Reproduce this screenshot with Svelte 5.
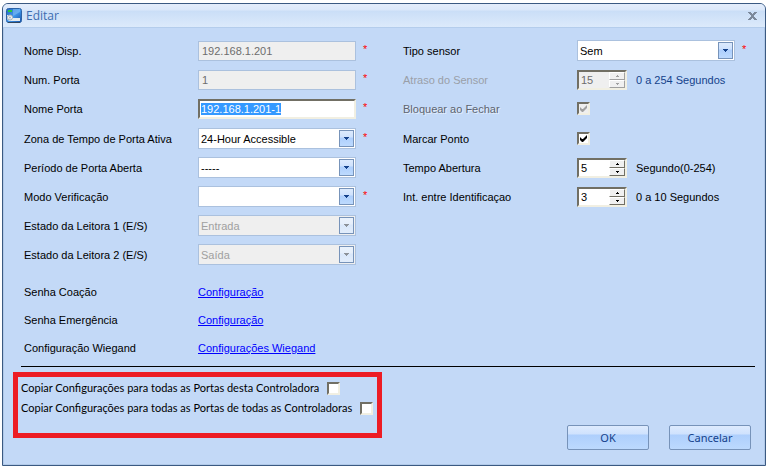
<script>
  import { onMount } from 'svelte';

  let nameInput;

  const leftRows = [
    { id: 'device', label: 'Nome Disp.', type: 'text', value: '192.168.1.201', disabled: true, required: true },
    { id: 'number', label: 'Num. Porta', type: 'text', value: '1', disabled: true, required: true },
    { id: 'name', label: 'Nome Porta', type: 'name', value: '192.168.1.201-1', required: true },
    { id: 'zone', label: 'Zona de Tempo de Porta Ativa', type: 'select', value: '24-Hour Accessible', required: true, start: true },
    { id: 'period', label: 'Período de Porta Aberta', type: 'select', value: '-----' },
    { id: 'mode', label: 'Modo Verificação', type: 'select', value: '', required: true },
    { id: 'reader1', label: 'Estado da Leitora 1 (E/S)', type: 'select', value: 'Entrada', disabled: true },
    { id: 'reader2', label: 'Estado da Leitora 2 (E/S)', type: 'select', value: 'Saída', disabled: true }
  ];

  const rightRows = [
    { id: 'sensor', label: 'Tipo sensor', type: 'select', value: 'Sem', required: true },
    { id: 'delay', label: 'Atraso do Sensor', type: 'spin', value: 15, max: 254, unit: '0 a 254 Segundos', disabled: true },
    { id: 'lock', label: 'Bloquear ao Fechar', type: 'check', checked: true, disabled: true },
    { id: 'mark', label: 'Marcar Ponto', type: 'check', checked: true, start: true },
    { id: 'open', label: 'Tempo Abertura', type: 'spin', value: 5, max: 254, unit: 'Segundo(0-254)' },
    { id: 'interval', label: 'Int. entre Identificaçao', type: 'spin', value: 3, max: 10, unit: '0 a 10 Segundos' }
  ];

  const links = [
    { label: 'Senha Coação', text: 'Configuração' },
    { label: 'Senha Emergência', text: 'Configuração' },
    { label: 'Configuração Wiegand', text: 'Configurações Wiegand' }
  ];

  function step(event, direction) {
    const input = event.currentTarget.closest('.spin').querySelector('input');
    if (direction > 0) input.stepUp();
    else input.stepDown();
  }

  onMount(() => {
    nameInput.focus();
    nameInput.select();
  });
</script>

{#snippet checkbox(id, checked, disabled)}
  <span class="check">
    <input type="checkbox" {id} {checked} {disabled} />
    <svg viewBox="0 0 7 7" aria-hidden="true"><path d="M0 2v3l2 2h1l4-4V0L3 4H2z" /></svg>
  </span>
{/snippet}

{#snippet field(row)}
  <div class="row" class:start={row.start}>
    <label class="caption {row.id}" for={row.id}>{row.label}</label>
    {#if row.type === 'text'}
      <input class="text" type="text" id={row.id} value={row.value} disabled={row.disabled} />
    {:else if row.type === 'name'}
      <input class="text sunken" type="text" id={row.id} value={row.value} bind:this={nameInput} spellcheck="false" />
    {:else if row.type === 'select'}
      <span class="combo">
        <select id={row.id} disabled={row.disabled}><option>{row.value}</option></select>
        <span class="drop" class:off={row.disabled}>
          <svg viewBox="0 0 5 3" aria-hidden="true"><path d="M0 0h5v1H4v1H3v1H2V2H1V1H0z" /></svg>
        </span>
      </span>
    {:else if row.type === 'spin'}
      <span class="spin" class:off={row.disabled}>
        <input type="number" id={row.id} value={row.value} min="0" max={row.max} disabled={row.disabled} />
        <span class="steps">
          <button type="button" aria-label="Aumentar" disabled={row.disabled} onclick={(e) => step(e, 1)}>
            <svg viewBox="0 0 3 2" aria-hidden="true"><path d="M1 0h1v1h1v1H0V1h1z" /></svg>
          </button>
          <button type="button" aria-label="Diminuir" disabled={row.disabled} onclick={(e) => step(e, -1)}>
            <svg viewBox="0 0 3 2" aria-hidden="true"><path d="M0 0h3v1H2v1H1V1H0z" /></svg>
          </button>
        </span>
      </span>
      <span class="unit" class:off={row.disabled}>{row.unit}</span>
    {:else}
      {@render checkbox(row.id, row.checked, row.disabled)}
    {/if}
    {#if row.required}<span class="star">*</span>{/if}
  </div>
{/snippet}

<main>
  <header>
    <svg class="logo" viewBox="0 0 16 16" aria-hidden="true">
      <defs>
        <linearGradient id="screen" x1="0" y1="0" x2="1" y2="1">
          <stop offset="0" stop-color="#2468bd" />
          <stop offset="0.5" stop-color="#3f96ec" />
          <stop offset="1" stop-color="#1450a4" />
        </linearGradient>
      </defs>
      <rect x="0.5" y="0.5" width="15" height="14" rx="2" fill="url(#screen)" stroke="#2c62a6" />
      <path d="M7 1h7v3L7 8z" fill="#8cc6f5" opacity="0.5" />
      <rect x="2" y="2" width="4" height="2" fill="#28c93c" />
      <path d="M1 7h4l2 3h7v3H3l-2-2z" fill="#e3eaee" />
      <path d="M2 14.500h12" stroke="#33475d" />
      <circle cx="4" cy="9.500" r="2.500" fill="#f3f5f6" stroke="#a3afb8" />
      <circle cx="4" cy="9.500" r="1" fill="#a9b4bc" />
    </svg>
    <h1>Editar</h1>
    <button class="close" type="button" aria-label="Fechar">
      <svg viewBox="0 0 9 8" aria-hidden="true">
        <path d="M0 0h3v1h1v1h1V1h1V0h3v1H8v1H7v1H6v2h1v1h1v1h1v1H6V7H5V6H4v1H3v1H0V7h1V6h1V5h1V3H2V2H1V1H0z" />
      </svg>
    </button>
  </header>

  <form onsubmit={(e) => e.preventDefault()}>
    <div class="columns">
      <section>
        {#each leftRows as row}{@render field(row)}{/each}
        <div class="links">
          {#each links as link}
            <div class="row">
              <span class="caption">{link.label}</span>
              <a href="#config">{link.text}</a>
            </div>
          {/each}
        </div>
      </section>
      <section>
        {#each rightRows as row}{@render field(row)}{/each}
      </section>
    </div>

    <hr />

    <footer>
      <div class="copy">
        <div class="option">
          <label for="copy-this">Copiar Configurações para todas as Portas desta Controladora</label>
          {@render checkbox('copy-this', false, false)}
        </div>
        <div class="option">
          <label for="copy-all">Copiar Configurações para todas as Portas de todas as Controladoras</label>
          {@render checkbox('copy-all', false, false)}
        </div>
      </div>
      <div class="actions">
        <button class="action" type="submit">OK</button>
        <button class="action" type="button">Cancelar</button>
      </div>
    </footer>
  </form>
</main>

<style>
  :global(body) {
    background: #fff;
  }

  * {
    box-sizing: border-box;
  }

  main {
    margin: 3px 2px 2px;
    border: 1px solid #3b5a82;
    border-radius: 6px 6px 0 0;
    box-shadow: inset 0 0 0 1px #b1c9e8;
    background: #c3d9f7;
    color: #000;
    font: 11px/14px "Liberation Sans", Arial, sans-serif;
    overflow: hidden;
  }

  input,
  select,
  button {
    margin: 0;
    font: inherit;
    outline: none;
  }

  svg {
    display: block;
  }

  header {
    display: flex;
    align-items: center;
    height: 24px;
    padding: 0 8px 0 3px;
    border-bottom: 1px solid #b4cdec;
    background: linear-gradient(#e4edfb 0, #dbe8fa 6px, #cadef7 7px, #dceafb 23px);
  }

  .logo {
    width: 16px;
    height: 16px;
  }

  h1 {
    flex: 1;
    margin: 0 0 0 4px;
    color: #3c6cb0;
    font: 12px/16px "Open Sans", "Noto Sans", sans-serif;
  }

  .close {
    padding: 0;
    border: 0;
    background: none;
    fill: #7c899b;
  }

  .close svg {
    width: 9px;
    height: 8px;
  }

  form {
    padding: 8px 10px 15px;
  }

  .columns {
    display: grid;
    grid-template-columns: 379px 1fr;
    padding-left: 11px;
  }

  .row {
    display: flex;
    align-items: center;
    height: 29px;
  }

  .start {
    margin-top: 1px;
  }

  .caption {
    width: 174px;
    white-space: nowrap;
  }

  .delay {
    color: #9a9fa8;
  }

  .lock {
    color: #5d6470;
    text-shadow: 1px 1px 0 #e4eefb;
  }

  .star {
    margin: 0 0 4px 7px;
    color: #f00;
  }

  .text {
    width: 158px;
    height: 20px;
    padding: 0 3px;
    border: 1px solid #abc1de;
    background: #fff;
    color: #000;
  }

  .text:disabled {
    background: #efefef;
    color: #6d6d6d;
  }

  .text.sunken {
    padding: 0 1px;
    border: 2px solid;
    border-color: #716f64 #f1efe2 #f1efe2 #716f64;
  }

  .sunken::selection {
    background: rgba(51, 153, 255, 0.996);
    color: #fff;
  }

  .combo {
    position: relative;
    width: 158px;
    height: 21px;
  }

  select {
    width: 100%;
    height: 100%;
    padding: 0 18px 0 2px;
    border: 1px solid #abc1de;
    border-radius: 0;
    appearance: none;
    background: #fff;
    color: #000;
  }

  select:disabled {
    background: #efefef;
    color: #a0a0a0;
    opacity: 1;
  }

  .drop {
    position: absolute;
    top: 2px;
    right: 2px;
    bottom: 2px;
    display: grid;
    place-items: center;
    width: 15px;
    border: 1px solid #7793b9;
    background: linear-gradient(#dceafd 0, #cfe2fd 6px, #aecffc 7px, #bddafe 15px);
    fill: #15428b;
    pointer-events: none;
  }

  .drop svg {
    width: 5px;
    height: 3px;
  }

  .drop.off {
    background: linear-gradient(#eaf2fc 0, #e6effb 6px, #d9e7fa 7px, #e2edfb 15px);
    fill: #8d9299;
  }

  .spin {
    display: flex;
    width: 50px;
    height: 20px;
    border: 2px solid;
    border-color: #716f64 #f1efe2 #f1efe2 #716f64;
    background: #fff;
  }

  .spin input {
    flex: 1;
    min-width: 0;
    padding: 0 2px;
    border: 0;
    appearance: textfield;
    background: none;
    color: #000;
  }

  .spin input::-webkit-inner-spin-button {
    display: none;
  }

  .spin.off {
    background: #efefef;
  }

  .spin input:disabled {
    color: #6d6d6d;
  }

  .steps {
    display: flex;
    flex-direction: column;
    width: 16px;
  }

  .steps button {
    display: grid;
    flex: 1;
    place-items: center;
    padding: 0;
    border: 1px solid;
    border-color: #fff #716f64 #716f64 #fff;
    background: #f0f0f0;
    fill: #000;
  }

  .steps button:disabled {
    border-color: #fff #a0a0a0 #a0a0a0 #fff;
    fill: #a0a0a0;
  }

  .steps svg {
    width: 3px;
    height: 2px;
  }

  .unit {
    margin-left: 9px;
  }

  .unit.off {
    color: #15428b;
  }

  .check {
    position: relative;
    width: 13px;
    height: 13px;
  }

  .check input {
    display: block;
    width: 13px;
    height: 13px;
    border: 2px solid;
    border-color: #716f64 #f1efe2 #f1efe2 #716f64;
    appearance: none;
    background: #fff;
  }

  .check input:disabled {
    background: #efefef;
  }

  .check svg {
    position: absolute;
    top: 3px;
    left: 3px;
    width: 7px;
    height: 7px;
    visibility: hidden;
    pointer-events: none;
  }

  .check input:checked + svg {
    visibility: visible;
  }

  .check input:disabled + svg {
    fill: #a0a0a0;
  }

  .links {
    margin-top: 9px;
  }

  .links .row {
    height: 28px;
  }

  a {
    color: #00f;
    text-underline-offset: 1px;
  }

  hr {
    height: 1px;
    margin: 4px 0 5px 8px;
    border: 0;
    background: #000;
  }

  footer {
    display: flex;
    align-items: flex-start;
    justify-content: space-between;
  }

  .copy {
    width: 369px;
    height: 66px;
    padding: 1px 0 0 3px;
    border: 5px solid #ed1c24;
    font-family: Lato, "Liberation Sans", sans-serif;
  }

  .option {
    display: flex;
    align-items: center;
    gap: 8px;
    height: 20px;
    white-space: nowrap;
  }

  .actions {
    display: flex;
    gap: 20px;
    margin: 53px 4px 0 0;
  }

  .action {
    width: 82px;
    height: 25px;
    padding: 0;
    border: 1px solid #7793b9;
    border-radius: 2px;
    background: linear-gradient(#deebfe 0, #cfe2fd 8px, #aecffc 9px, #bddafe 24px);
    color: #15428b;
    font: 11px/16px "Noto Sans", "Open Sans", sans-serif;
  }
</style>
